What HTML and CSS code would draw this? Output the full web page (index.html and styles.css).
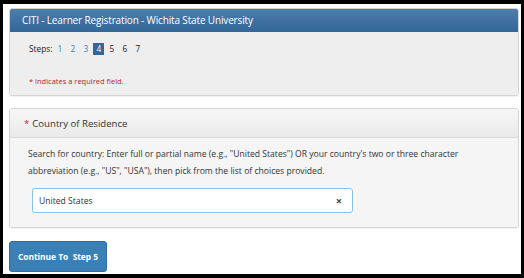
FILE: index.html
```html
<!DOCTYPE html>
<html>
<head>
<meta charset="utf-8">
<link rel="stylesheet" href="styles.css">
</head>
<body>
<div class="frame">
  <section class="panel">
    <div class="panel-head blue">CITI - Learner Registration - Wichita State University</div>
    <div class="panel-body gray">
      <div class="steps">
        <span class="label">Steps:</span>
        <a class="step done">1</a>
        <a class="step done">2</a>
        <a class="step done">3</a>
        <span class="step current">4</span>
        <span class="step">5</span>
        <span class="step">6</span>
        <span class="step">7</span>
      </div>
      <div class="req">* indicates a required field.</div>
    </div>
  </section>
  <section class="panel panel2">
    <div class="panel-head light"><span class="star">*</span>Country of Residence</div>
    <div class="panel-body light-body">
      <p class="help">Search for country: Enter full or partial name (e.g., "United States") OR your country's two or three character abbreviation (e.g., "US", "USA"), then pick from the list of choices provided.</p>
      <div class="input">
        <span class="value">United States</span>
        <span class="clear">×</span>
      </div>
    </div>
  </section>
  <button class="btn">Continue To&nbsp; Step 5</button>
</div>
</body>
</html>
```
FILE: styles.css
```css
html, body { margin: 0; padding: 0; background: #fff; }
body { font-family: "Open Sans", "Noto Sans", sans-serif; color: #333; }
.frame {
  box-sizing: border-box;
  width: 524px;
  height: 278px;
  border-style: solid;
  border-color: #000;
  border-width: 4px 3px 4px 3px;
  padding: 4px 2px 0 6px;
  display: flex;
  flex-direction: column;
  background: #fff;
}
.panel {
  border: 1px solid #d4d4d4;
  border-radius: 3px;
  overflow: hidden;
  box-shadow: 0 1px 1px rgba(0,0,0,0.06);
}
.panel-head.blue {
  height: 23px;
  box-sizing: border-box;
  background: linear-gradient(#4d7cab, #336699);
  color: #fff;
  font-size: 10px;
  line-height: 23px;
  padding-left: 12px;
  letter-spacing: -0.15px;
}
.panel-body.gray {
  background: #eeeeee;
  height: 63px;
  box-sizing: border-box;
  padding: 10px 18px 0 19px;
}
.steps { display: flex; align-items: center; font-size: 8.3px; height: 13px; color: #222; }
.steps .label { margin-right: 2px; }
.step { width: 11px; height: 12px; text-align: center; line-height: 12px; margin-right: 2px; }
.step.done { color: #3a7fb8; }
.step.current { background: #336699; color: #fff; }
.req { color: #b0262b; font-size: 7.5px; margin-top: 21px; }
.panel2 { margin-top: 12px; }
.panel-head.light {
  height: 29px;
  box-sizing: border-box;
  background: linear-gradient(#f7f7f7, #e9e9e9);
  border-bottom: 1px solid #dadada;
  font-size: 9.6px;
  line-height: 29px;
  padding-left: 14px;
  color: #333;
}
.star { color: #c0282d; margin-right: 3px; }
.light-body {
  background: #f5f5f5;
  padding: 8px 18px 14px 22px;
}
.help { margin: 0 0 0 -4px; font-size: 8.6px; line-height: 17px; color: #333; }
.input {
  margin-top: 8px;
  width: 321px;
  height: 25px;
  box-sizing: border-box;
  border: 1px solid #8fc0e8;
  border-radius: 3px;
  background: #fff;
  display: flex;
  align-items: center;
  justify-content: space-between;
  padding: 0 10px 0 6px;
  font-size: 8.6px;
  color: #333;
}
.clear { font-size: 11px; font-weight: bold; color: #444; }
.btn {
  margin-top: 13px;
  align-self: flex-start;
  width: 98px;
  height: 31px;
  border: 1px solid #2e6da4;
  border-radius: 3px;
  background: #3a80b6;
  color: #fff;
  font-family: "Open Sans", sans-serif;
  font-weight: bold;
  font-size: 8.4px;
  padding: 0;
}
```
